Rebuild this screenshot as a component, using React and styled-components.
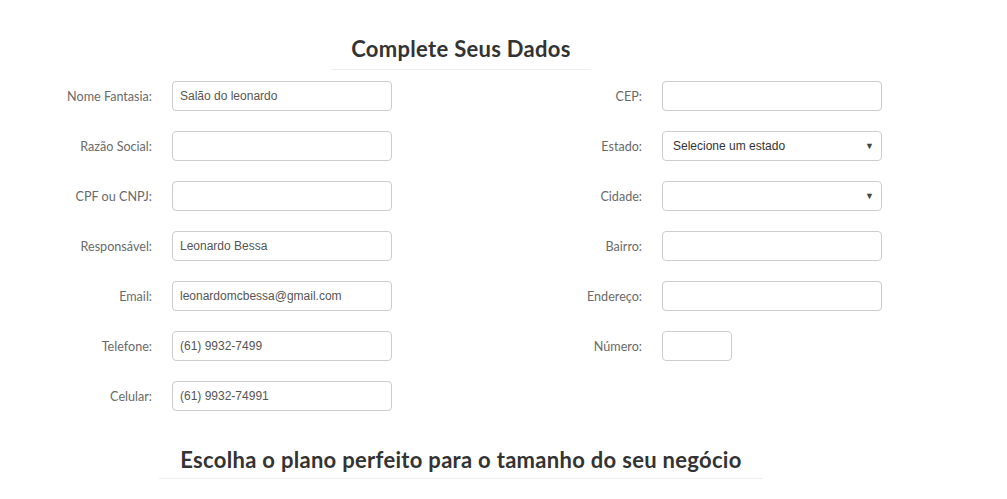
import React from 'react';
import styled, { createGlobalStyle } from 'styled-components';

const GlobalStyle = createGlobalStyle`
    body {
        margin: 0;
        background: #fff;
        font-family: Lato, "Open Sans", sans-serif;
    }
`;

const Page = styled.div`
    width: 922px;
    display: flex;
    flex-direction: column;
    align-items: center;
    padding-top: 35px;
`;

const SectionTitle = styled.h2`
    margin: 0;
    padding: 0 ${props => props.pad || 20}px ${props => props.bottom || 6}px;
    border-bottom: 1px solid #eeeeee;
    font-family: Lato, "Open Sans", sans-serif;
    font-weight: 700;
    font-size: 22px;
    line-height: 28px;
    color: #333333;
    letter-spacing: 0.3px;
`;

const FormBox = styled.div`
    align-self: flex-start;
    display: flex;
    flex-direction: row;
    margin-top: 11px;
`;

const FieldColumn = styled.div`
    display: flex;
    flex-direction: column;
    gap: 20px;
`;

const Row = styled.div`
    display: flex;
    flex-direction: row;
    align-items: center;
    gap: 20px;
    height: 30px;
`;

const Label = styled.label`
    width: ${props => props.width}px;
    text-align: right;
    font-family: Lato, "Open Sans", sans-serif;
    font-weight: 400;
    font-size: 12.6px;
    color: #6a6a6a;
`;

const Input = styled.div`
    box-sizing: border-box;
    width: ${props => props.width || 220}px;
    height: 30px;
    border: 1px solid #cccccc;
    border-radius: 4px;
    padding: 0 7px;
    display: flex;
    align-items: center;
    justify-content: space-between;
    font-family: "Liberation Sans", Arial, sans-serif;
    font-size: 12px;
    color: #555;
    background: #fff;
`;

const SelectText = styled.span`
    padding-left: 3px;
    color: #333;
`;

const Arrow = styled.span`
    font-size: 9px;
    color: #444;
`;

const BottomTitle = styled(SectionTitle)`
    margin-top: 35px;
`;

const leftFields = [
    { label: 'Nome Fantasia:', value: 'Salão do leonardo' },
    { label: 'Razão Social:', value: '' },
    { label: 'CPF ou CNPJ:', value: '' },
    { label: 'Responsável:', value: 'Leonardo Bessa' },
    { label: 'Email:', value: 'leonardomcbessa@gmail.com' },
    { label: 'Telefone:', value: '(61) 9932-7499' },
    { label: 'Celular:', value: '(61) 9932-74991' },
];

const rightFields = [
    { label: 'CEP:' },
    { label: 'Estado:', select: 'Selecione um estado' },
    { label: 'Cidade:', select: '' },
    { label: 'Bairro:' },
    { label: 'Endereço:' },
    { label: 'Número:', width: 70 },
];

const App = () => (
    <Page>
        <GlobalStyle />
        <SectionTitle>Complete Seus Dados</SectionTitle>
        <FormBox>
            <FieldColumn>
                {leftFields.map(f => (
                    <Row key={f.label}>
                        <Label width={152}>{f.label}</Label>
                        <Input>{f.value}</Input>
                    </Row>
                ))}
            </FieldColumn>
            <FieldColumn>
                {rightFields.map(f => (
                    <Row key={f.label}>
                        <Label width={250}>{f.label}</Label>
                        <Input width={f.width}>
                            {f.select !== undefined && (
                                <>
                                    <SelectText>{f.select}</SelectText>
                                    <Arrow>▼</Arrow>
                                </>
                            )}
                        </Input>
                    </Row>
                ))}
            </FieldColumn>
        </FormBox>
        <BottomTitle pad={21} bottom={4}>Escolha o plano perfeito para o tamanho do seu negócio</BottomTitle>
    </Page>
);

export default App;
